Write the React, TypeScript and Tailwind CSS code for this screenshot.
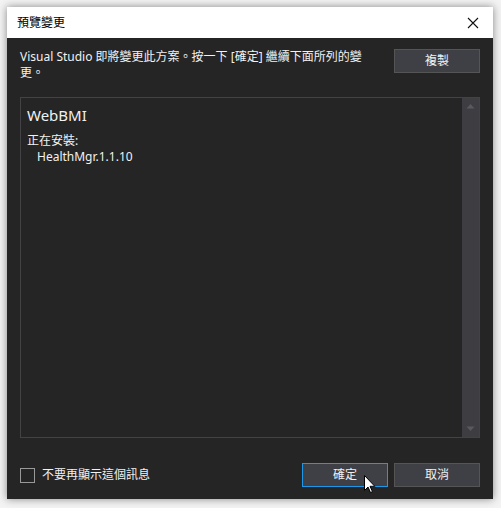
import React from "react";

const FONT = {
  fontFamily: '"Segoe UI", "Noto Sans", "Noto Sans CJK TC", sans-serif',
};

function Button({
  label,
  focused,
}: {
  label: string;
  focused?: boolean;
}) {
  return (
    <button
      className={`w-[86px] h-[24px] flex items-center justify-center text-[12px] text-[#f1f1f1] bg-[#3f3f46] border ${
        focused ? "border-[#1c97ea]" : "border-[#555555]"
      }`}
    >
      {label}
    </button>
  );
}

export default function App() {
  return (
    <div
      className="w-[501px] h-[508px] bg-[#f3f3f3] pt-[7px] pl-[7px]"
      style={FONT}
    >
      <div className="relative w-[486px] h-[492px] flex flex-col shadow-[0_0_8px_rgba(0,0,0,0.45)]">
        {/* Title bar */}
        <div className="h-[31px] bg-white flex items-center justify-between pl-[10px] pr-[14px]">
          <span className="text-[12px] text-black">預覽變更</span>
          <svg width="12" height="12" viewBox="0 0 12 12">
            <path
              d="M1 1L11 11M11 1L1 11"
              stroke="#111"
              strokeWidth="1.1"
              fill="none"
            />
          </svg>
        </div>

        {/* Body */}
        <div className="flex-1 bg-[#252526] flex flex-col px-[13px] pt-[11px] pb-[12px]">
          <div className="flex justify-between">
            <p className="w-[350px] text-[12px] leading-[16px] text-[#f1f1f1]">
              Visual Studio 即將變更此方案。按一下 [確定] 繼續下面所列的變更。
            </p>
            <Button label="複製" />
          </div>

          {/* Changes box */}
          <div className="mt-[16px] h-[341px] border border-[#434346] bg-[#252526] flex">
            <div className="flex-1 pl-[6px] pt-[7px]">
              <div className="text-[15px] leading-[20px] text-[#f1f1f1]">
                WebBMI
              </div>
              <div className="mt-[8px] text-[12px] leading-[16px] text-[#f1f1f1]">
                正在安裝:
              </div>
              <div className="pl-[10px] text-[12px] leading-[16px] text-[#f1f1f1]">
                HealthMgr.1.1.10
              </div>
            </div>
            <div className="w-[17px] bg-[#3e3e42] flex flex-col items-center justify-between py-[5px]">
              <svg width="9" height="6" viewBox="0 0 9 6">
                <path d="M0.5 5.5L4.5 1L8.5 5.5Z" fill="#5a5a5e" />
              </svg>
              <svg width="9" height="6" viewBox="0 0 9 6">
                <path d="M0.5 0.5L4.5 5L8.5 0.5Z" fill="#5a5a5e" />
              </svg>
            </div>
          </div>

          {/* Footer */}
          <div className="mt-auto flex items-center justify-between">
            <label className="flex items-center gap-[7px]">
              <span className="w-[15px] h-[15px] border border-[#999999] bg-[#252526]" />
              <span className="text-[12px] text-[#f1f1f1]">
                不要再顯示這個訊息
              </span>
            </label>
            <div className="flex gap-[6px]">
              <Button label="確定" focused />
              <Button label="取消" />
            </div>
          </div>
        </div>

        {/* Mouse cursor */}
        <svg
          className="absolute left-[357px] top-[468px]"
          width="12"
          height="19"
          viewBox="0 0 12 19"
        >
          <path
            d="M0.5 0.5L0.5 15.5L4 12L6.5 17.5L8.5 16.6L6 11.3L10.8 11.3Z"
            fill="#fff"
            stroke="#000"
            strokeWidth="1"
            strokeLinejoin="round"
          />
        </svg>
      </div>
    </div>
  );
}
